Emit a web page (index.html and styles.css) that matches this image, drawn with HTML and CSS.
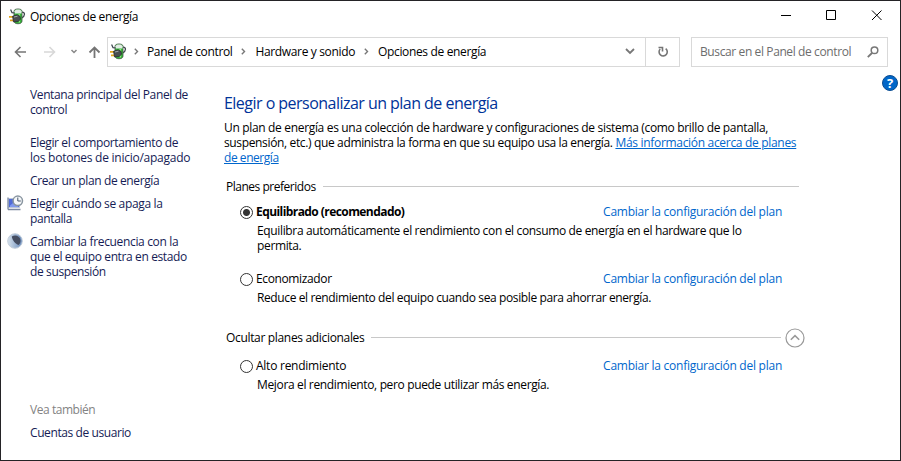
FILE: index.html
```
<!DOCTYPE html>
<html lang="es">
<head>
<meta charset="utf-8">
<title>Opciones de energía</title>
<link rel="stylesheet" href="styles.css">
</head>
<body>
<svg class="defs" width="0" height="0" aria-hidden="true">
  <symbol id="power" viewBox="0 0 17 17">
    <path d="M13 4.200c3.400-.200 3.200 4-.200 5.600" fill="none" stroke="#3e454c" stroke-width="1.300"/>
    <path d="M5 3.200C5 .200 13 .200 13 3.200v10c0 3.400-8 3.400-8 0z" fill="#35b438" stroke="#46544a" stroke-width=".8"/>
    <path d="M5.500 3.200C6 .800 12 .800 12.500 3.200v2.200h-7z" fill="#e2ebe5"/>
    <path d="M10.300 6v8.500" stroke="#8ce87d" stroke-width="1.500"/>
    <path d="M1.600 1.400 3 4.600 5.600 5" fill="none" stroke="#39424a" stroke-width="1.200"/>
    <path d="M0 8.800h4M1 12.300h4" stroke="#e2a51b" stroke-width="1.700"/>
    <path d="M3.500 8.300 8 6.800l3 1.500.5 3-2.300 2.200-4.700.4z" fill="#4a4d51" stroke="#25282b" stroke-width=".7"/>
    <path d="m5 9 3.500-.800" stroke="#a1a5a8"/>
  </symbol>
  <symbol id="chev" viewBox="0 0 5 7"><path d="m.8.800 2.700 2.700L.8 6.200" fill="none" stroke="#777" stroke-width="1.400"/></symbol>
</svg>
<div class="window">
  <header class="titlebar">
    <svg class="app-icon"><use href="#power"/></svg>
    <span class="title">Opciones de energía</span>
    <svg class="controls" viewBox="0 0 108 12">
      <path d="M0 5.500h10M45.500.500h9v9h-9zM91 .500l9.500 9.500M100.500.500 91 10" fill="none" stroke="#000" stroke-width="1"/>
    </svg>
  </header>
  <nav class="toolbar">
    <svg class="arrows" viewBox="0 0 92 16">
      <path d="M12 8H1.500M6.500 3l-5 5 5 5" fill="none" stroke="#757575" stroke-width="1.600"/>
      <path d="M30 8h10.500M35.500 3l5 5-5 5" fill="none" stroke="#d8d8d8" stroke-width="1.600"/>
      <path d="m57.500 6 2.500 2.500L62.500 6" fill="none" stroke="#888" stroke-width="1.500"/>
      <path d="M80.500 14V3.500M75.500 8.500l5-5 5 5" fill="none" stroke="#757575" stroke-width="1.800"/>
    </svg>
    <div class="address">
      <svg class="addr-icon"><use href="#power"/></svg>
      <svg class="chev"><use href="#chev"/></svg>
      <span class="crumb">Panel de control</span>
      <svg class="chev"><use href="#chev"/></svg>
      <span class="crumb">Hardware y sonido</span>
      <svg class="chev"><use href="#chev"/></svg>
      <span class="crumb">Opciones de energía</span>
      <svg class="drop" viewBox="0 0 10 7"><path d="m1 1 4 4 4-4" fill="none" stroke="#777" stroke-width="1.800"/></svg>
      <div class="refresh">
        <svg viewBox="0 0 12 12"><path d="M8.700 2.600A4.100 4.100 0 1 1 3.200 3M1.500 1.500h4v4" fill="none" stroke="#757575" stroke-width="1.600"/></svg>
      </div>
    </div>
    <div class="search">
      <span>Buscar en el Panel de control</span>
      <svg viewBox="0 0 12 12"><circle cx="7.500" cy="4.300" r="3.300" fill="none" stroke="#777" stroke-width="1.500"/><path d="M5 7 .8 11.200" stroke="#777" stroke-width="1.800"/></svg>
    </div>
  </nav>
  <div class="body">
    <aside class="side">
      <a class="task home">Ventana principal del Panel de<br>control</a>
      <a class="task">Elegir el comportamiento de<br><span class="wide">los botones de inicio/apagado</span></a>
      <a class="task">Crear un plan de energía</a>
      <a class="task">
        <svg class="task-icon" viewBox="0 0 17 17">
          <path d="M1.500 3.500h11v9h-11z" fill="#506bd7" stroke="#bac6da" stroke-width="1"/>
          <path d="M1 2.500v12M1 14.500h12.500" fill="none" stroke="#7b88a0" stroke-width="1.300"/>
          <path d="M3 10.500 11 4v8H3z" fill="#8099ef"/>
          <circle cx="10.800" cy="5.800" r="4.700" fill="#f5f7f9" stroke="#8995a0" stroke-width="1.500"/>
          <path d="M10.800 2.500v3.500h3" fill="none" stroke="#46586c"/>
        </svg>
        <span class="mid">Elegir cuándo se apaga la</span><br>pantalla</a>
      <a class="task">
        <svg class="task-icon" viewBox="0 0 17 17">
          <defs><linearGradient id="moon"><stop stop-color="#d8e3ed"/><stop offset="1" stop-color="#6689ba"/></linearGradient></defs>
          <circle cx="8" cy="8" r="7.300" fill="url(#moon)" stroke="#c3cedb"/>
          <path d="M4.800 3.500c3-2.300 8-.8 8.700 3.500.2 2-.5 4-2 5C8.500 11 5.500 7.500 4.800 3.500z" fill="#454d61"/>
        </svg>
        <span class="mid">Cambiar la frecuencia con la</span><br>que el equipo entra en estado<br>de suspensión</a>
      <div class="see-also">Vea también</div>
      <a class="task accounts">Cuentas de usuario</a>
    </aside>
    <main class="main">
      <h1>Elegir o personalizar un plan de energía</h1>
      <p class="intro">Un plan de energía es una colección de hardware y configuraciones de sistema (como brillo de pantalla,<br><span class="admin">suspensión, etc.) que administra la forma en que su equipo usa la energía.</span> <a>Más información acerca de planes</a><br><a class="tail">de energía</a></p>
      <div class="group preferred"><span>Planes preferidos</span><i class="rule"></i></div>
      <section class="plan first">
        <div class="plan-head"><i class="radio on"></i><b>Equilibrado (recomendado)</b><a>Cambiar la configuración del plan</a></div>
        <p>Equilibra automáticamente el rendimiento con el consumo de energía en el hardware que lo<br>permita.</p>
      </section>
      <section class="plan second">
        <div class="plan-head"><i class="radio"></i><span class="eco">Economizador</span><a>Cambiar la configuración del plan</a></div>
        <p class="tight">Reduce el rendimiento del equipo cuando sea posible para ahorrar energía.</p>
      </section>
      <div class="group extra"><span>Ocultar planes adicionales</span><i class="rule"></i>
        <svg class="collapse" viewBox="0 0 20 20"><circle cx="10" cy="10" r="9" fill="#fff" stroke="#999" stroke-width="1.200"/><path d="m5.800 11.800 4.200-4.200 4.200 4.200" fill="none" stroke="#999" stroke-width="1.500"/></svg>
      </div>
      <section class="plan third">
        <div class="plan-head"><i class="radio"></i><span>Alto rendimiento</span><a>Cambiar la configuración del plan</a></div>
        <p>Mejora el rendimiento, pero puede utilizar más energía.</p>
      </section>
    </main>
    <div class="help">?</div>
  </div>
</div>
</body>
</html>
```
FILE: styles.css
```
* { box-sizing: border-box; }
body { margin: 0; font: 12px/15px "Open Sans", "Noto Sans", sans-serif; letter-spacing: -0.25px; color: #000; background: #fff; }
svg { display: block; flex: none; }
.defs { position: absolute; }
.window { width: 901px; height: 461px; border: 1px solid #242326; background: #fff; white-space: nowrap; overflow: hidden; }
.titlebar { height: 30px; display: flex; align-items: center; padding-left: 8px; }
.app-icon, .addr-icon { width: 17px; height: 17px; }
.title { margin-left: 4px; letter-spacing: -0.35px; }
.controls { width: 108px; height: 12px; margin-left: auto; margin-right: 11px; }
.toolbar { height: 41px; display: flex; align-items: center; padding-left: 13px; }
.arrows { width: 92px; height: 16px; }
.address { width: 573px; height: 30px; margin-left: 1px; border: 1px solid #d9d9d9; display: flex; align-items: center; padding-left: 2px; }
.crumb { letter-spacing: -0.35px; }
.chev { width: 5px; height: 7px; margin: 0 9px; }
.addr-icon + .chev { margin: 0 8px 0 7px; }
.drop { width: 10px; height: 7px; margin-left: auto; margin-right: 10px; }
.refresh { width: 34px; height: 28px; border-left: 1px solid #d9d9d9; display: flex; align-items: center; justify-content: center; }
.refresh svg { width: 12px; height: 12px; }
.search { width: 197px; height: 30px; margin-left: 11px; border: 1px solid #d9d9d9; display: flex; align-items: center; justify-content: space-between; padding: 0 8px; color: #6d6d6d; letter-spacing: -0.39px; }
.search svg { width: 12px; height: 12px; }
.body { display: flex; }
.side { width: 223px; padding: 15px 0 0 29px; color: #151c55; letter-spacing: -0.38px; }
.wide { letter-spacing: -0.25px; }
.mid { letter-spacing: -0.34px; }
.task { display: block; position: relative; margin-bottom: 8px; }
.home { margin-bottom: 18px; }
.task-icon { position: absolute; left: -23px; top: -1px; width: 17px; height: 17px; }
.see-also { margin-top: 123px; margin-bottom: 8px; color: #838383; letter-spacing: -0.45px; }
.accounts { letter-spacing: -0.41px; }
.main { width: 580px; padding-top: 20px; }
h1 { margin: 0; font-size: 16px; line-height: 22px; font-weight: 400; color: #003399; letter-spacing: -0.53px; }
p { margin: 0; }
.intro { margin-top: 6px; letter-spacing: -0.33px; }
.intro .admin { letter-spacing: -0.355px; }
.intro a { color: #0066cc; text-decoration: underline; letter-spacing: -0.31px; }
.intro .tail { letter-spacing: -0.45px; }
.group { display: flex; align-items: center; height: 15px; padding-left: 2px; }
.preferred { margin-top: 14px; letter-spacing: -0.48px; }
.rule { flex: 1; height: 1px; background: #c8c8c8; margin-left: 7px; margin-right: 5px; }
.plan { padding-left: 16px; }
.plan p { padding-left: 17px; margin-top: 4px; letter-spacing: -0.35px; }
.plan .tight { letter-spacing: -0.385px; }
.plan-head { display: flex; align-items: center; height: 15px; }
.plan-head b { letter-spacing: -0.57px; }
.plan-head a { margin-left: auto; margin-right: 22px; color: #0066cc; }
.eco { letter-spacing: -0.37px; }
.radio { width: 13px; height: 13px; border: 1px solid #333; border-radius: 50%; margin-right: 3px; background: #fff; flex: none; position: relative; top: 1px; }
.on { background: radial-gradient(circle, #333 3px, #fff 4px); }
.first { margin-top: 10px; }
.second { margin-top: 18px; }
.extra { margin-top: 25px; letter-spacing: -0.33px; }
.extra .rule { margin-right: 4px; }
.collapse { width: 20px; height: 20px; margin-right: -1px; }
.third { margin-top: 13px; }
.help { width: 16px; height: 16px; margin: 3px 0 0 78px; border-radius: 50%; background: #0066c8; border: 1px solid #0b4d91; color: #fff; font-weight: 700; font-size: 13px; line-height: 14px; text-align: center; }
```
